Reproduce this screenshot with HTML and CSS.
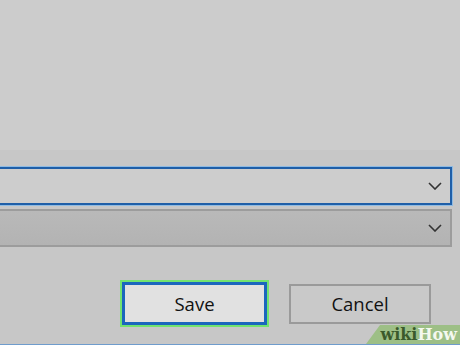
FILE: index.html
```html
<!DOCTYPE html>
<html lang="en">
<head>
    <meta charset="UTF-8">
    <meta name="viewport" content="width=device-width, initial-scale=1.0">
    <title>Save Dialog</title>
    <link rel="stylesheet" href="styles.css">
</head>
<body>
    <div class="dialog-top"></div>

    <div class="dialog-panel">
        <div class="field-list">
            <div class="dropdown dropdown-active">
                <svg class="chevron" width="14" height="8" viewBox="0 0 14 8"><path d="M1 1 L7 7 L13 1" fill="none" stroke="#333" stroke-width="1.6"/></svg>
            </div>
            <div class="dropdown dropdown-disabled">
                <svg class="chevron" width="14" height="8" viewBox="0 0 14 8"><path d="M1 1 L7 7 L13 1" fill="none" stroke="#333" stroke-width="1.6"/></svg>
            </div>
        </div>

        <div class="dialog-buttons">
            <div class="save-ring">
                <button class="btn btn-save">Save</button>
            </div>
            <button class="btn btn-cancel">Cancel</button>
        </div>
    </div>

    <div class="watermark"><span class="wm-wiki">wiki</span><span class="wm-how">How</span></div>
</body>
</html>
```

FILE: styles.css
```css
body {
    margin: 0;
    padding: 0;
    width: 460px;
    height: 345px;
    overflow: hidden;
    background-color: #cccccc;
    font-family: "Open Sans", "Noto Sans", sans-serif;
    position: relative;
}
.dialog-top {
    height: 150px;
    background-color: #cccccc;
}
.dialog-panel {
    height: 195px;
    background-color: #c7c7c7;
    box-sizing: border-box;
    padding-top: 17px;
    border-bottom: 1px solid #6f9ccc;
}
.field-list {
    display: flex;
    flex-direction: column;
    gap: 3px;
    margin-left: -4px;
    width: 456px;
}
.dropdown {
    height: 38px;
    box-sizing: border-box;
    display: flex;
    align-items: center;
    justify-content: flex-end;
    padding-right: 8px;
}
.dropdown-active {
    background-color: #cdcdcd;
    border: 2px solid #1f5fa8;
    box-shadow: 0 0 0 1px #8fbbe3;
}
.dropdown-disabled {
    background: linear-gradient(#b9b9b9, #b3b3b3);
    border: 2px solid #9c9c9c;
    margin-top: 1px;
}
.chevron {
    display: block;
}
.dialog-buttons {
    display: flex;
    align-items: center;
    gap: 20px;
    margin-top: 33px;
    padding-left: 120px;
}
.save-ring {
    border: 2px solid #72e36f;
    background-color: #a8e8a0;
    padding: 0;
}
.btn {
    font-family: "Open Sans", "Noto Sans", sans-serif;
    font-size: 18.5px;
    color: #111;
    cursor: pointer;
    box-sizing: border-box;
    padding: 0;
}
.btn-save {
    display: block;
    width: 145px;
    height: 43px;
    background-color: #e1e1e1;
    border: 3px solid #1b66bd;
}
.btn-cancel {
    width: 142px;
    height: 40px;
    background-color: #c9c9c9;
    border: 2px solid #9a9a9a;
}
.watermark {
    position: absolute;
    right: 0;
    bottom: 1px;
    width: 94px;
    height: 19px;
    background-color: #9dbf86;
    clip-path: polygon(14px 0, 100% 0, 100% 100%, 0 100%);
    font-family: "DejaVu Serif", "Liberation Serif", serif;
    font-weight: bold;
    font-size: 16px;
    line-height: 20px;
    text-align: right;
    padding-right: 3px;
    box-sizing: border-box;
}
.wm-wiki {
    color: #3b5a2c;
}
.wm-how {
    color: #f4f8ef;
}
```
